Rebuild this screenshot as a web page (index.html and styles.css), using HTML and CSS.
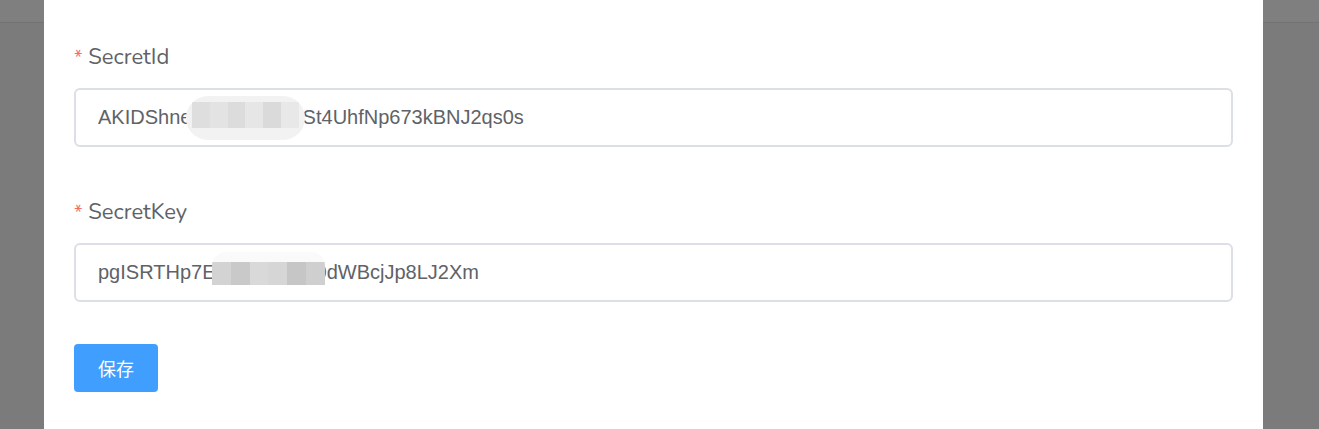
FILE: index.html
```html
<!DOCTYPE html>
<html lang="zh">
<head>
    <meta charset="UTF-8">
    <title>密钥设置</title>
    <link rel="stylesheet" href="styles.css">
</head>
<body>
<div class="topbar"></div>
<div class="dialog">
    <form class="form">
        <div class="form-item">
            <label class="label"><span class="req">*</span> SecretId</label>
            <div class="input-wrap">
                <input class="input" type="text" value="AKIDShne0000000000St4UhfNp673kBNJ2qs0s" readonly>
                <span class="mask mask-id">
                    <i style="background:#dedede"></i><i style="background:#e3e3e3"></i><i style="background:#dcdcdc"></i><i style="background:#e6e6e6"></i><i style="background:#dadada"></i><i style="background:#e8e8e8"></i>
                </span>
            </div>
        </div>
        <div class="form-item last">
            <label class="label"><span class="req">*</span> SecretKey</label>
            <div class="input-wrap">
                <input class="input" type="text" value="pgISRTHp7E0000000000dWBcjJp8LJ2Xm" readonly>
                <span class="mask mask-key">
                    <i style="background:#d3d3d3"></i><i style="background:#c9c9c9"></i><i style="background:#d9d9d9"></i><i style="background:#d6d6d6"></i><i style="background:#c6c6c6"></i><i style="background:#cfcfcf"></i>
                </span>
            </div>
        </div>
        <button class="btn" type="button">保存</button>
    </form>
</div>
</body>
</html>
```

FILE: styles.css
```css
body {
    margin: 0;
    height: 429px;
    overflow: hidden;
    background: #7b7b7b;
    font-family: 'Nunito', 'Lato', 'Noto Sans CJK SC', sans-serif;
}
.topbar {
    position: absolute;
    top: 0;
    left: 0;
    right: 0;
    height: 22px;
    background: #7f7f7f;
    border-bottom: 1px solid #737373;
}
.dialog {
    position: relative;
    margin-left: 44px;
    width: 1219px;
    height: 429px;
    background: #fff;
    box-sizing: border-box;
    padding: 43px 30px 0 30px;
}
.form-item {
    margin-bottom: 51px;
}
.form-item.last {
    margin-bottom: 42px;
}
.label {
    display: block;
    height: 28px;
    font-size: 22px;
    color: #606266;
    line-height: 28px;
    margin-bottom: 17px;
}
.req {
    color: #f56c6c;
    font-size: 19px;
    line-height: 1;
}
.input-wrap {
    position: relative;
}
.input {
    display: block;
    width: 100%;
    height: 59px;
    box-sizing: border-box;
    border: 2px solid #dcdfe6;
    border-radius: 6px;
    padding: 0 22px;
    font-family: 'Liberation Sans', Arial, sans-serif;
    font-size: 20px;
    color: #606266;
    outline: none;
}
.mask {
    position: absolute;
    display: flex;
    overflow: hidden;
}
.mask i {
    flex: 1;
}
.mask-id {
    left: 112px;
    top: 8px;
    width: 119px;
    height: 44px;
    border-radius: 22px;
    background: #f2f2f2;
    padding: 6px 6px 12px;
    box-sizing: border-box;
}
.mask-key {
    left: 138px;
    top: 9px;
    width: 113px;
    height: 33px;
    border-radius: 14px 14px 0 0;
    background: #fafafa;
    padding-top: 10px;
    box-sizing: border-box;
}
.btn {
    width: 84px;
    height: 48px;
    border: none;
    border-radius: 4px;
    background: #409eff;
    color: #fff;
    font-size: 18px;
    font-family: 'Noto Sans CJK SC', sans-serif;
}
```
